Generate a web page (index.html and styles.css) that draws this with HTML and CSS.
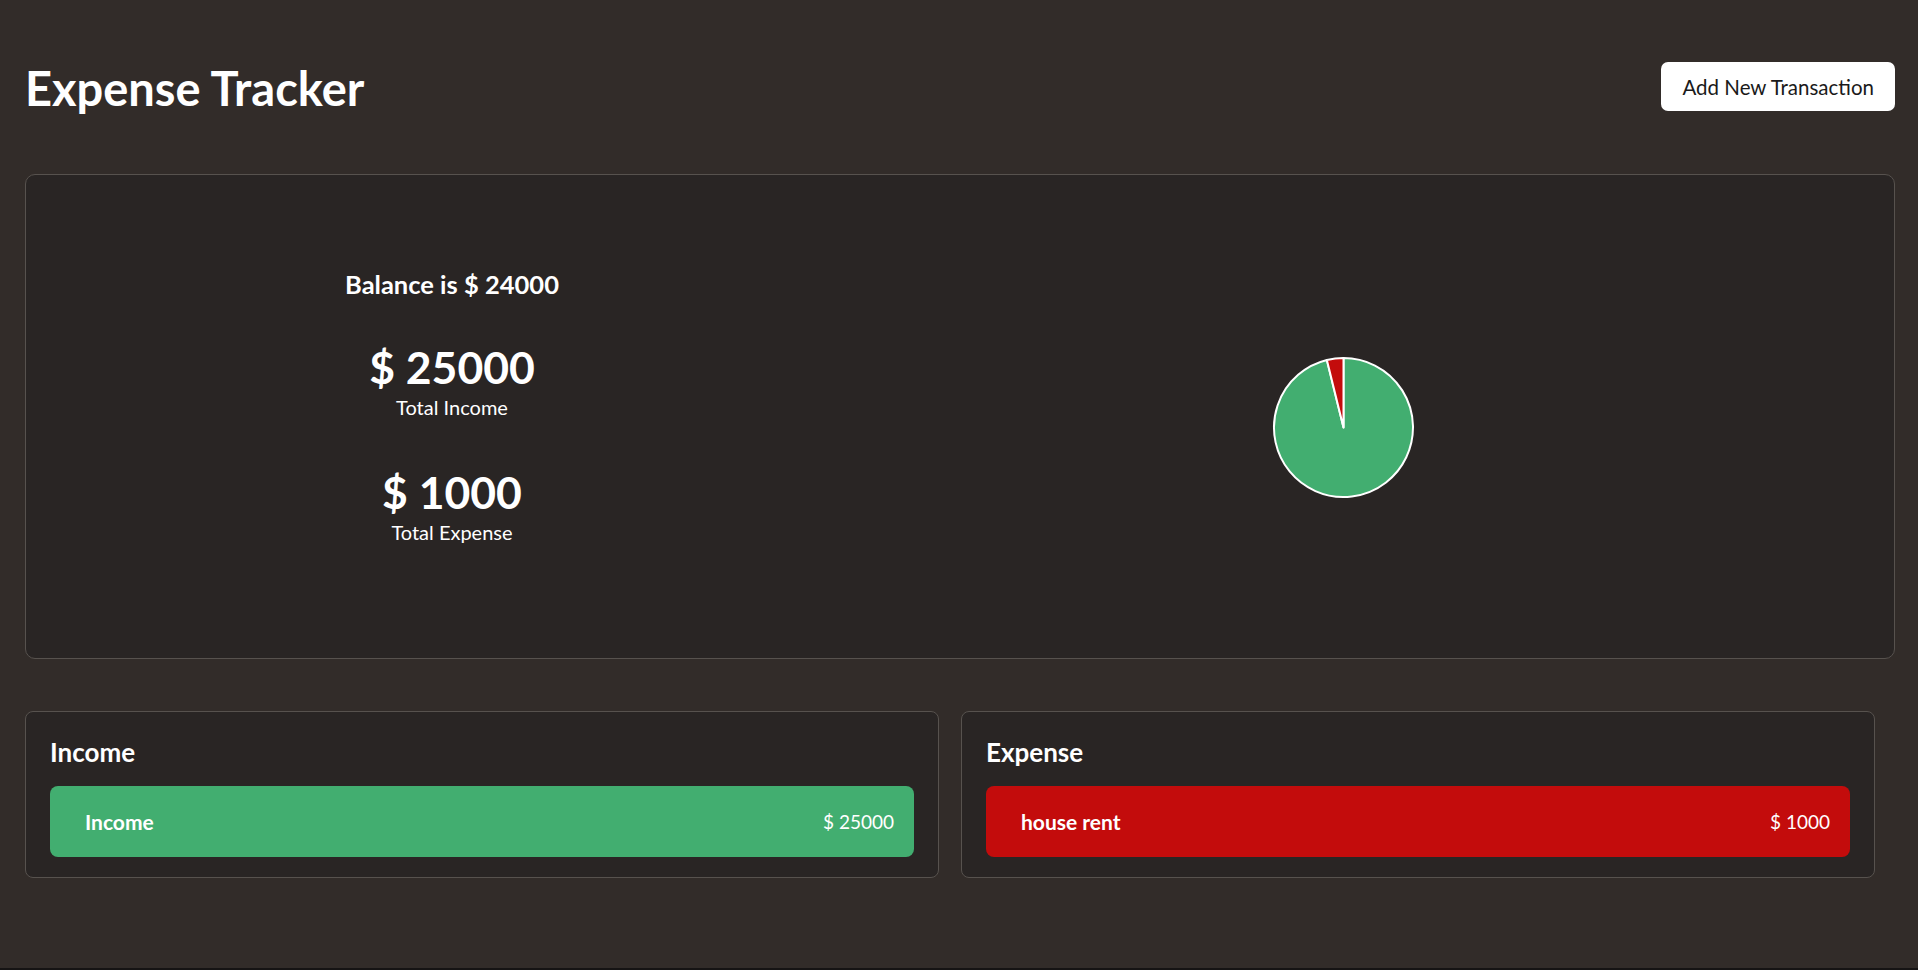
FILE: index.html
```html
<!DOCTYPE html>
<html lang="en">
<head>
<meta charset="utf-8">
<title>Expense Tracker</title>
<link rel="stylesheet" href="styles.css">
</head>
<body>
<div class="page">
  <header class="header">
    <h1 class="title">Expense Tracker</h1>
    <button class="add-btn" type="button">Add New Transaction</button>
  </header>

  <section class="summary">
    <div class="stats">
      <h2 class="balance">Balance is $ 24000</h2>
      <div class="stat stat-income">
        <div class="stat-value">$ 25000</div>
        <div class="stat-label">Total Income</div>
      </div>
      <div class="stat stat-expense">
        <div class="stat-value">$ 1000</div>
        <div class="stat-label">Total Expense</div>
      </div>
    </div>
    <div class="chart">
      <svg class="pie" width="143" height="143" viewBox="0 0 143 143" aria-label="Income vs expense chart">
        <path class="slice-income" d="M71.5 71.5 L71.5 2 A69.5 69.5 0 1 1 54.86 4.02 Z"/>
        <path class="slice-expense" d="M71.5 71.5 L54.86 4.02 A69.5 69.5 0 0 1 71.5 2 Z"/>
      </svg>
    </div>
  </section>

  <section class="lists">
    <div class="list-card">
      <h3 class="list-title">Income</h3>
      <div class="entry entry-income">
        <span class="entry-name">Income</span>
        <span class="entry-amount">$ 25000</span>
      </div>
    </div>
    <div class="list-card">
      <h3 class="list-title">Expense</h3>
      <div class="entry entry-expense">
        <span class="entry-name">house rent</span>
        <span class="entry-amount">$ 1000</span>
      </div>
    </div>
  </section>
</div>
</body>
</html>
```

FILE: styles.css
```css
html {
  background: #161414;
}

body {
  margin: 0;
  font-family: "Lato", "Open Sans", sans-serif;
  color: #ffffff;
}

.page {
  background: #322c29;
  min-height: 968px;
  box-sizing: border-box;
  padding: 62px 23px 0 25px;
}

.header {
  display: flex;
  align-items: center;
  justify-content: space-between;
  height: 49px;
}

.title {
  margin: 0;
  font-size: 47px;
  font-weight: 700;
  line-height: 1.2;
  position: relative;
  top: 2px;
}

.add-btn {
  height: 49px;
  padding: 0 21px;
  border: none;
  border-radius: 7px;
  background: #ffffff;
  color: #1a1a1a;
  font-family: inherit;
  font-size: 20.5px;
  font-weight: 400;
}

.summary {
  margin-top: 63px;
  height: 485px;
  box-sizing: border-box;
  background: #292524;
  border: 1px solid #57524e;
  border-radius: 10px;
  display: flex;
  align-items: center;
}

.stats {
  width: 852px;
  display: flex;
  flex-direction: column;
  align-items: center;
  text-align: center;
  padding-bottom: 20px;
}

.balance {
  margin: 0;
  font-size: 25.5px;
  font-weight: 700;
  line-height: 1.2;
}

.stat-value {
  font-size: 44.5px;
  font-weight: 700;
  line-height: 1;
}

.stat-label {
  font-size: 20px;
  line-height: 1.2;
}

.stat-income {
  margin-top: 46px;
}

.stat-income .stat-label {
  margin-top: 5.5px;
}

.stat-expense {
  margin-top: 51px;
}

.stat-expense .stat-label {
  margin-top: 5.5px;
}

.chart {
  flex: 1;
  display: flex;
  justify-content: center;
  padding-right: 85px;
  margin-top: 22px;
}

.pie path {
  stroke: #ffffff;
  stroke-width: 2;
  stroke-linejoin: round;
}

.slice-income {
  fill: #42ae70;
}

.slice-expense {
  fill: #c30c0c;
}

.lists {
  margin-top: 52px;
  padding-right: 20px;
  display: grid;
  grid-template-columns: 1fr 1fr;
  gap: 22px;
}

.list-card {
  background: #292524;
  border: 1px solid #57524e;
  border-radius: 8px;
  padding: 25px 24px 20px;
}

.list-title {
  margin: 0 0 18px;
  font-size: 26px;
  font-weight: 700;
  line-height: 1.2;
}

.entry {
  height: 71px;
  box-sizing: border-box;
  border-radius: 8px;
  display: flex;
  align-items: center;
  justify-content: space-between;
  padding: 0 20px 0 35px;
}

.entry-income {
  background: #42ae70;
}

.entry-expense {
  background: #c30c0c;
}

.entry-name {
  font-size: 21px;
  font-weight: 700;
}

.entry-amount {
  font-size: 19px;
  font-weight: 400;
}
```
